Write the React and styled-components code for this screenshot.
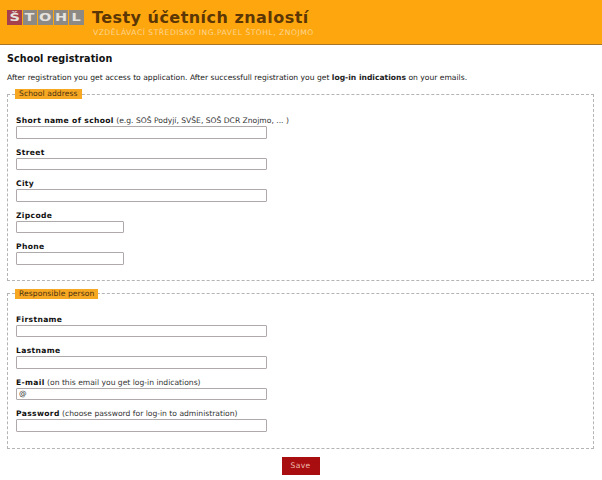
import React from 'react';
import styled, { createGlobalStyle } from 'styled-components';

const GlobalStyle = createGlobalStyle`
  html, body {
    margin: 0;
    padding: 0;
    background: #fff;
    color: #222;
    font-family: "DejaVu Sans", sans-serif;
    font-size: 7.6px;
  }
`;

const Header = styled.header`
  height: 34px;
  background: #fea60d;
  border-bottom: 1px solid #a8752a;
  display: flex;
  align-items: flex-start;
  padding: 10px 0 0 7px;
`;

const Logo = styled.div`
  display: flex;
  height: 15px;
  gap: 1px;
`;

const LogoLetter = styled.span`
  width: 14.6px;
  display: flex;
  justify-content: center;
  line-height: 16px;
  font-size: 10px;
  font-weight: bold;
  color: #e6e3de;
  background: ${({ $first }) => ($first ? '#a5404f' : '#8d8a86')};
`;

const LogoGlyph = styled.span`
  display: inline-block;
  transform: scaleX(1.45);
`;

const Titles = styled.div`
  margin-left: 8px;
  margin-top: -2px;
`;

const Title = styled.div`
  font-size: 16px;
  line-height: 19px;
  font-weight: bold;
  letter-spacing: 0.46px;
  color: #5b3606;
`;

const Subtitle = styled.div`
  font-size: 7.6px;
  line-height: 10px;
  letter-spacing: 0.5px;
  color: #fcd592;
  margin-top: 1px;
  margin-left: 1px;
`;

const Main = styled.main`
  padding: 0 8px 0 7px;
`;

const Heading = styled.h1`
  font-size: 9.6px;
  line-height: 13px;
  font-weight: bold;
  letter-spacing: 0.1px;
  color: #111;
  margin: 7px 0 0;
`;

const Intro = styled.p`
  margin: 7px 0 0;
  line-height: 12px;
`;

const Group = styled.fieldset`
  margin: ${({ $first }) => ($first ? '5px' : '8px')} 0 0;
  padding: ${({ $first }) => ($first ? '16px 8px 15px' : '15px 8px 16px')};
  border: 1px dashed #b4b4b4;
  min-width: 0;
`;

const Legend = styled.legend`
  background: #f7a823;
  color: #4a3210;
  padding: 0 4px;
  margin-left: -1px;
  line-height: 10px;
  height: 10px;
  letter-spacing: 0.08px;
`;

const Field = styled.div`
  margin-top: ${({ $first }) => ($first ? '0' : '8px')};
`;

const Label = styled.label`
  display: block;
  line-height: 11px;
  font-weight: bold;
  color: #111;
  letter-spacing: 0.34px;
`;

const Hint = styled.span`
  font-weight: normal;
  color: #333;
  letter-spacing: 0;
`;

const Input = styled.input`
  display: block;
  box-sizing: border-box;
  width: ${({ $short }) => ($short ? '108px' : '251px')};
  height: 12.5px;
  margin: 0;
  padding: 0 2px;
  border: 1px solid #b0a9ab;
  border-radius: 1px;
  background: #fff;
  font-family: "DejaVu Sans", sans-serif;
  font-size: 7.6px;
  color: #333;
`;

const Actions = styled.div`
  display: flex;
  justify-content: center;
  margin-top: 8px;
`;

const SaveButton = styled.button`
  width: 38px;
  height: 18px;
  padding: 0;
  border: 0;
  background: #a80d10;
  color: #eebcae;
  font-family: "DejaVu Sans", sans-serif;
  font-size: 7.6px;
  letter-spacing: 0.3px;
`;

const FormField = ({ label, hint, short, value, first }) => (
  <Field $first={first}>
    <Label>
      {label}
      {hint && <Hint> {hint}</Hint>}
    </Label>
    <Input $short={short} defaultValue={value} />
  </Field>
);

export default function App() {
  return (
    <>
      <GlobalStyle />
      <Header>
        <Logo>
          {['Š', 'T', 'O', 'H', 'L'].map((letter, index) => (
            <LogoLetter key={letter} $first={index === 0}>
              <LogoGlyph>{letter}</LogoGlyph>
            </LogoLetter>
          ))}
        </Logo>
        <Titles>
          <Title>Testy účetních znalostí</Title>
          <Subtitle>VZDĚLÁVACÍ STŘEDISKO ING.PAVEL ŠTOHL, ZNOJMO</Subtitle>
        </Titles>
      </Header>
      <Main>
        <Heading>School registration</Heading>
        <Intro>
          After registration you get access to application. After successfull registration you get{' '}
          <b>log-in indications</b> on your emails.
        </Intro>
        <Group $first>
          <Legend>School address</Legend>
          <FormField first label="Short name of school" hint="(e.g. SOŠ Podyjí, SVŠE, SOŠ DCR Znojmo, ... )" />
          <FormField label="Street" />
          <FormField label="City" />
          <FormField label="Zipcode" short />
          <FormField label="Phone" short />
        </Group>
        <Group>
          <Legend>Responsible person</Legend>
          <FormField first label="Firstname" />
          <FormField label="Lastname" />
          <FormField label="E-mail" hint="(on this email you get log-in indications)" value="@" />
          <FormField label="Password" hint="(choose password for log-in to administration)" />
        </Group>
        <Actions>
          <SaveButton>Save</SaveButton>
        </Actions>
      </Main>
    </>
  );
}
